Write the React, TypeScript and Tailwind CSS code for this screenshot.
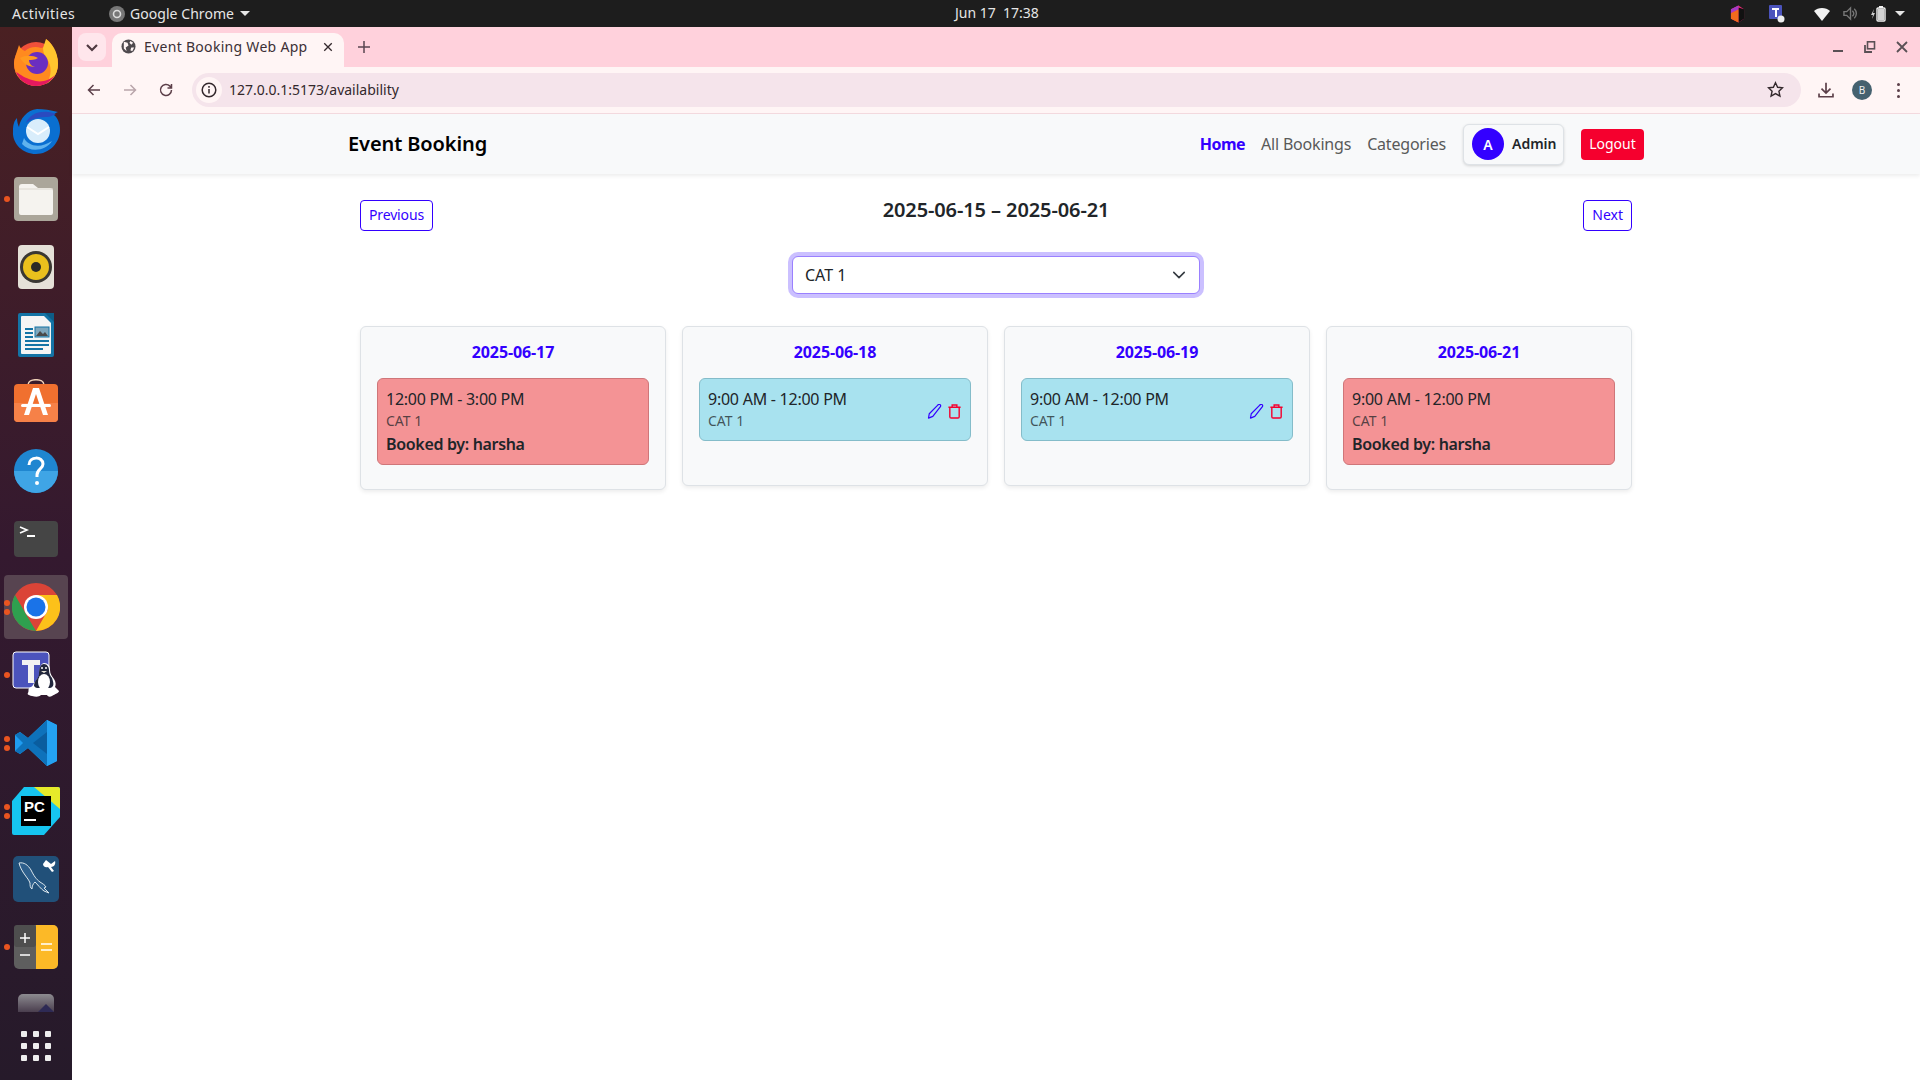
import React from 'react';

const PRIMARY = 'text-[#3300ff]';

const DockDot: React.FC<{ count?: number }> = ({ count = 0 }) => (
  <div className="w-[8px] ml-[3px] flex flex-col gap-[3px] items-center shrink-0">
    {Array.from({ length: count }).map((_, i) => (
      <div key={i} className="w-[6px] h-[6px] rounded-full bg-[#e95420]"></div>
    ))}
  </div>
);

const DockItem: React.FC<{ dots?: number; active?: boolean; first?: boolean; children: React.ReactNode }> = ({ dots, active, first, children }) => (
  <div className={`${first ? 'h-[70px]' : 'h-[68px]'} w-[72px] relative flex items-center justify-center shrink-0`}>
    {active && <div className="absolute left-[4px] top-[2px] w-[64px] h-[64px] rounded-[4px] bg-[#574450]"></div>}
    <div className="absolute left-0 top-0 bottom-0 flex items-center"><DockDot count={dots} /></div>
    <svg viewBox="0 0 48 48" className="w-[48px] h-[48px] relative">{children}</svg>
  </div>
);

const Dock: React.FC = () => (
  <aside className="w-[72px] shrink-0 bg-gradient-to-b from-[#4a2022] via-[#34192f] to-[#261a2a] flex flex-col overflow-hidden">
    <DockItem first>
      <circle cx="24" cy="26" r="22" fill="#f0503a" />
      <path d="M2 26a22 22 0 0 0 44 0c0-6-2-11-4-14-1-3-3-8-8-11 1 6-2 9-5 9-5-2-12-1-16 3-3-1-5-3-6-6C5 14 2 20 2 26z" fill="#ff8a1f" />
      <path d="M34 1c5 4 12 11 12 25 0 10-6 17-12 20 6-8 6-18 1-25-2-3-4-6-4-11 1-3 2-6 3-9z" fill="#ffc52e" />
      <path d="M4 34c3 8 11 14 20 14 8 0 15-4 19-11-6 6-15 8-23 5-7-2-11-5-16-8z" fill="#e5195f" />
      <circle cx="25" cy="25" r="11" fill="#6a2ec0" />
      <path d="M8 20c5-3 13-3 18 0-3 2-7 2-9 2 0 3 2 6 6 7-7 0-12-4-15-9z" fill="#ff9a1f" />
    </DockItem>
    <DockItem>
      <path d="M1 24c0-6 1-10 4-13 0 4 1 7 2 9 1-8 8-17 18-18 7 0 13 1 21 3-3 1-4 2-4 3 4 3 6 9 6 15 0 13-11 24-24 24S0 37 1 24z" fill="#0a6fd1" />
      <path d="M14 16c3-7 10-12 22-11 3 0 5 1 8 2-3 1-6 3-9 3-6 0-15 1-21 6z" fill="#2a4bc0" />
      <circle cx="26" cy="24" r="12" fill="#d9edfb" />
      <path d="M15 20l11 7 11-7" fill="none" stroke="#fff" strokeWidth="2" />
      <path d="M12 31c4 8 16 11 28 3-6 10-22 12-30 3z" fill="#5fb2ee" />
    </DockItem>
    <DockItem dots={1}>
      <rect x="2" y="2" width="44" height="44" rx="4" fill="#aba69a" />
      <path d="M7 12a3 3 0 0 1 3-3h11l5 4h12a3 3 0 0 1 3 3v22a2 2 0 0 1-2 2H9a2 2 0 0 1-2-2z" fill="#f5f3ef" />
      <path d="M7 14h34" stroke="#dcd8cf" strokeWidth="1" />
    </DockItem>
    <DockItem>
      <rect x="6" y="2" width="36" height="44" rx="4" fill="#e5e1d8" />
      <circle cx="24" cy="24" r="16" fill="#3a3833" />
      <circle cx="24" cy="24" r="13" fill="#eac01d" />
      <circle cx="24" cy="24" r="5" fill="#2b2a26" />
    </DockItem>
    <DockItem>
      <path d="M6 4a2 2 0 0 1 2-2h26l8 8v34a2 2 0 0 1-2 2H8a2 2 0 0 1-2-2z" fill="#1474a6" />
      <path d="M9 6a1 1 0 0 1 1-1h22l7 7v30a1 1 0 0 1-1 1H10a1 1 0 0 1-1-1z" fill="#f5f5f5" />
      <path d="M33 2h9v9z" fill="#0d5d87" />
      <rect x="13" y="17" width="8" height="2" fill="#1474a6" />
      <rect x="13" y="21" width="8" height="2" fill="#1474a6" />
      <rect x="13" y="25" width="8" height="2" fill="#1474a6" />
      <rect x="13" y="29" width="24" height="2" fill="#1474a6" />
      <rect x="13" y="33" width="24" height="2" fill="#1474a6" />
      <rect x="13" y="37" width="18" height="2" fill="#1474a6" />
      <rect x="23" y="16" width="14" height="10" fill="#7fa7bd" stroke="#1474a6" />
      <path d="M24 25l4-5 3 3 2-2 3 4z" fill="#4a4a4a" />
    </DockItem>
    <DockItem>
      <path d="M16 6c0-7 16-7 16 0" fill="none" stroke="#f0d2b8" strokeWidth="1.6" />
      <rect x="2" y="5" width="44" height="38" rx="4" fill="#f0702f" />
      <path d="M2 24h44v15a4 4 0 0 1-4 4H6a4 4 0 0 1-4-4z" fill="#f68148" />
      <path d="M21 9h6l9 27h-5l-7-21-7 21h-5z" fill="#fff" />
      <rect x="9" y="25" width="30" height="3" rx="1.5" fill="#fff" />
    </DockItem>
    <DockItem>
      <circle cx="24" cy="24" r="22" fill="#1f86d0" />
      <path d="M2 24a22 22 0 0 0 44 0z" fill="#3fa5e6" />
      <path d="M17 18c0-9 14-9 14-1 0 5-6 5-6 11v2" fill="none" stroke="#fff" strokeWidth="3" />
      <circle cx="25" cy="36" r="2" fill="#fff" />
    </DockItem>
    <DockItem>
      <rect x="2" y="6" width="44" height="36" rx="4" fill="#454545" />
      <path d="M8 12l7 3-7 3" fill="none" stroke="#fff" strokeWidth="1.6" />
      <rect x="15" y="20" width="8" height="2" fill="#fff" />
    </DockItem>
    <DockItem dots={2} active>
      <circle cx="24" cy="24" r="24" fill="#db4437" />
      <path d="M24 48A24 24 0 0 1 3 12l12 21 9 15z" fill="#2fa04f" />
      <path d="M24 48l12-21-12-15h21a24 24 0 0 1-21 36z" fill="#fcc11a" />
      <circle cx="24" cy="24" r="12" fill="#fff" />
      <circle cx="24" cy="24" r="9.5" fill="#1a73e8" />
    </DockItem>
    <DockItem dots={1}>
      <rect x="1" y="1" width="36" height="36" rx="3" fill="#4b53bc" stroke="#fff" />
      <path d="M10 9h18v5h-6v18h-6V14h-6z" fill="#f2f2f2" />
      <path d="M32 12c4 0 6 3 6 7 0 4 2 6 4 9 2 3 2 6 1 8l4 4c0 2-4 3-7 5-2 1-4 1-5-1h-6c-2 2-5 2-9 1-4-1-5-2-4-3 1-2 0-4 1-5 1-1 3-1 4-3 1-3 5-6 6-9 0-4 1-13 5-13z" fill="#fff" />
      <path d="M32 13c3 0 5 3 5 6 0 3 1 6 3 8 1 3 2 6 1 8-1 1-2 2-3 2H25c-1 0-2-1-3-2 0-3 1-5 3-7 1-2 2-3 2-5 0-4 1-10 5-10z" fill="#22273d" />
      <ellipse cx="32" cy="31" rx="6" ry="8" fill="#fff" />
      <circle cx="30" cy="17" r="1" fill="#fff" />
      <circle cx="34" cy="17" r="1" fill="#fff" />
      <path d="M29 20h6l-3 2z" fill="#e8e4d8" />
    </DockItem>
    <DockItem dots={2}>
      <path d="M35 1l10 5v36l-10 5-19-18-8 6-5-3V16l5-3 8 6z" fill="#1f9cf0" />
      <path d="M35 1L16 19 8 13l-5 3 8 8-8 8 5 3 8-6 19 18z" fill="#0e72bb" />
      <path d="M35 13v22L21 24z" fill="#0a5d9f" />
      <path d="M35 1l10 5v36l-10 5z" fill="#24a2f2" />
    </DockItem>
    <DockItem dots={2}>
      <path d="M12 0h34a2 2 0 0 1 2 2v28L32 48H2a2 2 0 0 1-2-2V14z" fill="#16c5f0" />
      <path d="M22 0h24a2 2 0 0 1 2 2v20z" fill="#e6ea2a" />
      <rect x="9" y="9" width="30" height="30" fill="#000" />
      <rect x="12" y="32" width="12" height="2" fill="#fff" />
      <text x="12" y="25" fill="#fff" fontFamily="Liberation Sans" fontSize="15" fontWeight="700">PC</text>
    </DockItem>
    <DockItem>
      <rect x="1" y="1" width="46" height="46" rx="5" fill="#215079" />
      <path d="M7 8c5-1 9 2 12 7 3 6 5 9 9 12 3 2 5 3 6 5l-2 1 5 5-5-2c-3-2-7-7-9-9-2 2-3 4-3 7-2-1-2-4-2-6-1-3-3-5-5-8-3-4-5-8-6-12z" fill="#2d5f8c" stroke="#dbe6ec" strokeWidth="1" />
      <path d="M34 5l5 4 4-3c1 3-1 6-4 6l3 4-2 1-4-5c-3 1-5-1-5-3z" fill="#fff" />
    </DockItem>
    <DockItem dots={1}>
      <rect x="2" y="2" width="44" height="44" rx="5" fill="#5e5e5e" />
      <path d="M24 2h17a5 5 0 0 1 5 5v34a5 5 0 0 1-5 5H24z" fill="#fcb927" />
      <rect x="2" y="2" width="22" height="22" fill="#4e4e4e" rx="3" />
      <path d="M8 15h10M13 10v10M8 32h10M29 21h11M29 27h11" stroke="#fff" strokeWidth="1.5" />
    </DockItem>
    <div className="h-[31px] w-[72px] shrink-0 flex justify-center items-end overflow-hidden">
      <svg viewBox="0 0 36 18" className="w-[36px] h-[18px]">
        <defs>
          <linearGradient id="trayFade" x1="0" y1="0" x2="0" y2="1">
            <stop offset="0" stopColor="#8d8b90" />
            <stop offset="1" stopColor="#4a3e4e" />
          </linearGradient>
        </defs>
        <path d="M0 5a5 5 0 0 1 5-5h26a5 5 0 0 1 5 5v13H0z" fill="url(#trayFade)" />
        <path d="M20 18l8-8 8 8z" fill="#2e2a55" />
      </svg>
    </div>
    <div className="flex-1 flex items-center justify-center pb-[1px]">
      <div className="grid grid-cols-3 gap-[6px]">
        {Array.from({ length: 9 }).map((_, i) => (
          <div key={i} className="w-[6px] h-[6px] rounded-[1px] bg-[#eeeeee]"></div>
        ))}
      </div>
    </div>
  </aside>
);

const TopBar: React.FC = () => (
  <header className="h-[27px] shrink-0 bg-[#1d1d1d] text-[#e6e6e6] text-[14px] flex items-center relative">
    <span className="ml-[12px] w-[97px] tracking-[0.5px]">Activities</span>
    <svg viewBox="0 0 16 16" className="w-[16px] h-[16px] mr-[5px]">
      <circle cx="8" cy="8" r="8" fill="#777" />
      <circle cx="8" cy="8" r="3.5" fill="none" stroke="#ddd" strokeWidth="1.6" />
    </svg>
    <span className="tracking-[0.05px]">Google Chrome</span>
    <span className="ml-[6px] w-0 h-0 border-x-[5px] border-x-transparent border-t-[5px] border-t-[#e6e6e6]"></span>
    <span className="absolute left-[955px] top-[2px] text-[14px] whitespace-pre">Jun 17  17:38</span>
    <div className="ml-auto mr-[15px] flex items-center">
      <svg viewBox="0 0 16 18" className="w-[15px] h-[18px] mr-[24px]">
        <path d="M1 4l8-4 6 4v10l-6 4-8-4z" fill="#ec2a73" />
        <path d="M9 2l6 2v10l-6 4z" fill="#111" />
        <path d="M1 8l8-4v14l-8-4z" fill="#f26a1d" />
        <path d="M1 4l8-4v4L1 8z" fill="#a43ac8" />
      </svg>
      <svg viewBox="0 0 16 18" className="w-[16px] h-[18px] mr-[29px]">
        <rect x="0" y="0" width="13" height="14" rx="1" fill="#4b53bc" />
        <path d="M3 3h7v2H8v7H6V5H3z" fill="#fff" />
        <circle cx="12" cy="14" r="3.5" fill="#eee" />
      </svg>
      <svg viewBox="0 0 16 16" className="w-[16px] h-[16px] mr-[13px]">
        <path d="M0 5c4-4 12-4 16 0l-8 10z" fill="#f2f2f2" />
      </svg>
      <svg viewBox="0 0 16 16" className="w-[15px] h-[15px] mr-[13px]">
        <path d="M1 6h3l4-4v12l-4-4H1zM10 5c2 2 2 4 0 6M12 3c3 3 3 7 0 10" fill="none" stroke="#777" strokeWidth="1.5" />
      </svg>
      <svg viewBox="0 0 16 16" className="w-[16px] h-[16px] mr-[8px]">
        <path d="M3 3L0 9h2l-1 4 3-6H2z" fill="#ccc" />
        <rect x="6" y="2" width="8" height="13" rx="1" fill="none" stroke="#f2f2f2" strokeWidth="1.4" />
        <rect x="8" y="0" width="4" height="2" fill="#f2f2f2" />
        <rect x="7" y="3" width="6" height="11" fill="#f2f2f2" opacity="0.85" />
      </svg>
      <span className="w-0 h-0 border-x-[5px] border-x-transparent border-t-[5px] border-t-[#e6e6e6]"></span>
    </div>
  </header>
);

const ToolIcon: React.FC<{ className?: string; children: React.ReactNode }> = ({ className = '', children }) => (
  <svg viewBox="0 0 16 16" fill="none" stroke="currentColor" strokeWidth="1.5" className={`w-[16px] h-[16px] shrink-0 ${className}`}>
    {children}
  </svg>
);

const BrowserChrome: React.FC = () => (
  <div className="shrink-0">
    <div className="h-[40px] bg-[#ffd1dc] flex items-end relative text-[#4f3a41]">
      <div className="ml-[6px] mb-[6px] w-[28px] h-[28px] rounded-[8px] bg-[#ffe6ec] flex items-center justify-center">
        <ToolIcon className="w-[12px] h-[12px]"><path d="M3 6l5 5 5-5" strokeWidth="2.2" /></ToolIcon>
      </div>
      <div className="ml-[6px] w-[232px] h-[34px] rounded-t-[10px] bg-[#fff5f5] flex items-center pl-[9px] pb-[7px] text-[14px] text-[#3c3035]">
        <svg viewBox="0 0 16 16" className="w-[15px] h-[15px] mr-[8px] shrink-0">
          <circle cx="8" cy="8" r="7.5" fill="#4f4a4e" />
          <path d="M3 3l4 1 1 3-3 2 1 4-3-3zM10 2l3 2-2 2-2-2zM11 9l3 0-2 4-2-1z" fill="#fff5f5" />
        </svg>
        <span className="tracking-[0.3px]">Event Booking Web App</span>
        <svg viewBox="0 0 12 12" className="w-[10px] h-[10px] ml-auto mr-[11px]" stroke="#33282c" strokeWidth="1.6"><path d="M1.5 1.5l9 9M10.5 1.5l-9 9" /></svg>
      </div>
      <svg viewBox="0 0 12 12" className="w-[12px] h-[12px] ml-[14px] mb-[14px]" stroke="#5a4550" strokeWidth="1.5"><path d="M6 0v12M0 6h12" /></svg>
      <div className="ml-auto mb-[14px] mr-[12px] flex items-center gap-[20px] text-[#5a5055]">
        <svg viewBox="0 0 12 12" className="w-[12px] h-[12px]" stroke="currentColor" strokeWidth="2"><path d="M1 10h10" /></svg>
        <svg viewBox="0 0 12 12" className="w-[12px] h-[12px]" fill="none" stroke="currentColor" strokeWidth="1.6"><rect x="3.5" y="0.8" width="7" height="7" /><path d="M1 4v7h7" strokeWidth="1.8" /></svg>
        <svg viewBox="0 0 12 12" className="w-[12px] h-[12px]" stroke="currentColor" strokeWidth="1.8"><path d="M1 1l10 10M11 1L1 11" /></svg>
      </div>
    </div>
    <div className="h-[47px] bg-[#fff5f5] border-b border-[#f5dbe0] flex items-center text-[#5c3f49]">
      <ToolIcon className="ml-[14px]"><path d="M14 8H2.5M7.5 3L2.5 8l5 5" /></ToolIcon>
      <ToolIcon className="ml-[20px] text-[#b9a5ab]"><path d="M2 8h11.5M8.5 3l5 5-5 5" /></ToolIcon>
      <ToolIcon className="ml-[20px]"><path d="M13.5 8a5.5 5.5 0 1 1-1.6-3.9L13.5 6M13.5 2v4h-4" /></ToolIcon>
      <div className="ml-[18px] mb-[1px] w-[1609px] h-[34px] rounded-full bg-[#f5e4eb] flex items-center pl-[4px]">
        <div className="w-[26px] h-[26px] rounded-full bg-[#fff5f5] flex items-center justify-center text-[#33282c]">
          <ToolIcon className="w-[14px] h-[14px]"><circle cx="8" cy="8" r="6.8" /><path d="M8 7v4.5M8 4v1.8" /></ToolIcon>
        </div>
        <span className="ml-[7px] text-[14px] text-[#33282c]">127.0.0.1:5173/availability</span>
        <ToolIcon className="ml-auto mr-[17px] w-[17px] h-[17px] text-[#33282c]"><path d="M8 1.6l2 4.3 4.6.5-3.4 3.2 1 4.6L8 11.9l-4.2 2.3 1-4.6-3.4-3.2L6 5.9z" strokeWidth="1.3" /></ToolIcon>
      </div>
      <ToolIcon className="ml-[16px] w-[18px] h-[18px]"><path d="M8 1.5v9M4 6.8l4 4 4-4M1.8 11v3h12.4v-3" /></ToolIcon>
      <div className="ml-[17px] w-[20px] h-[20px] rounded-full bg-[#45616f] text-[#f0f0f0] text-[10px] flex items-center justify-center">B</div>
      <div className="ml-[25px] flex flex-col gap-[3px]">
        <span className="w-[3px] h-[3px] rounded-full bg-[#5c3f49]"></span>
        <span className="w-[3px] h-[3px] rounded-full bg-[#5c3f49]"></span>
        <span className="w-[3px] h-[3px] rounded-full bg-[#5c3f49]"></span>
      </div>
    </div>
  </div>
);

const Navbar: React.FC = () => (
  <nav className="h-[60px] shrink-0 bg-[#f8f9fa] shadow-[0_2px_4px_rgba(0,0,0,0.075)] relative">
    <div className="w-[1320px] h-full mx-auto px-[12px] flex items-center">
      <span className="text-[20px] font-semibold text-black tracking-[-0.1px]">Event Booking</span>
      <div className="ml-auto flex items-center text-[16px]">
        <a className={`font-bold tracking-[-0.5px] ${PRIMARY}`}>Home</a>
        <a className="ml-[16px] text-[#595959] tracking-[-0.2px]">All Bookings</a>
        <a className="ml-[16px] text-[#595959] tracking-[-0.2px]">Categories</a>
        <div className="ml-[17px] h-[41px] w-[101px] rounded-[6px] border border-[#dee2e6] bg-[#f8f9fa] shadow-[0_1px_3px_rgba(0,0,0,0.15)] flex items-center pl-[8px]">
          <div className="w-[32px] h-[32px] rounded-full bg-[#3300ff] text-white text-[14px] font-semibold flex items-center justify-center">A</div>
          <span className="ml-[8px] mb-[2px] text-[14px] font-semibold text-[#212529]">Admin</span>
        </div>
        <button className="ml-[17px] h-[31px] w-[63px] rounded-[4px] bg-[#f5002e] text-white text-[14px] pb-[1px]">Logout</button>
      </div>
    </div>
  </nav>
);

const PencilIcon: React.FC = () => (
  <svg viewBox="0 0 16 16" fill="none" stroke="#3300ff" strokeWidth="1.3" className="w-[15px] h-[15px]">
    <path d="M11.5 1.2a1.6 1.6 0 0 1 2.8 1.6L6.2 13.2 1.6 15l.8-4.6z" strokeLinejoin="round" />
  </svg>
);

const TrashIcon: React.FC = () => (
  <svg viewBox="0 0 16 16" fill="none" stroke="#f5002e" strokeWidth="1.5" className="w-[15px] h-[15px]">
    <path d="M1.5 3.5h13M5.5 3.5V1h5v2.5M3 3.5v10.2c0 .8.6 1.3 1.3 1.3h7.4c.7 0 1.3-.5 1.3-1.3V3.5" />
  </svg>
);

interface Slot {
  time: string;
  bookedBy?: string;
}

const SlotCard: React.FC<{ slot: Slot }> = ({ slot }) => {
  const booked = Boolean(slot.bookedBy);
  return (
    <div
      className={`rounded-[6px] border px-[8px] pt-[8px] flex items-center justify-between ${
        booked ? 'bg-[#f49395] border-[#cf7679] mb-[8px] pb-[8px]' : 'bg-[#a8e2ef] border-[#84bcc9] mb-[28px] pb-[9px]'
      }`}
    >
      <div className="text-[16px] leading-[24px] text-[#212529]">
        <div className="tracking-[-0.25px]">{slot.time}</div>
        <div className="text-[14px] leading-[20px] text-[#212529bf]">CAT 1</div>
        {booked && <div className="mt-[1px] font-semibold tracking-[-0.33px]">Booked by: {slot.bookedBy}</div>}
      </div>
      {!booked && (
        <div className="flex items-center gap-[5px] mt-[5px]">
          <PencilIcon />
          <TrashIcon />
        </div>
      )}
    </div>
  );
};

const days: { date: string; slot: Slot }[] = [
  { date: '2025-06-17', slot: { time: '12:00 PM - 3:00 PM', bookedBy: 'harsha' } },
  { date: '2025-06-18', slot: { time: '9:00 AM - 12:00 PM' } },
  { date: '2025-06-19', slot: { time: '9:00 AM - 12:00 PM' } },
  { date: '2025-06-21', slot: { time: '9:00 AM - 12:00 PM', bookedBy: 'harsha' } },
];

const Availability: React.FC = () => (
  <main className="w-[1320px] mx-auto px-[24px] pt-[24px]">
    <div className="grid grid-cols-[1fr_auto_1fr] items-start">
      <button className={`justify-self-start mt-[2px] h-[31px] pb-[2px] px-[8px] rounded-[4px] border border-[#3300ff] bg-white text-[14px] tracking-[-0.15px] ${PRIMARY}`}>Previous</button>
      <h2 className="text-[20px] leading-[24px] font-semibold text-[#212529] tracking-[-0.1px]">2025-06-15 – 2025-06-21</h2>
      <button className={`justify-self-end mt-[2px] h-[31px] pb-[2px] px-[8px] rounded-[4px] border border-[#3300ff] bg-white text-[14px] ${PRIMARY}`}>Next</button>
    </div>
    <div className="mt-[25px] mx-auto w-[408px] h-[38px] rounded-[6px] border border-[#9a80ff] bg-white shadow-[0_0_0_4px_#cbc0ff] pl-[12px] pr-[13px] flex items-center justify-between text-[16px] text-[#212529]">
      <span>CAT 1</span>
      <svg viewBox="0 0 16 16" fill="none" stroke="#343a40" strokeWidth="1.8" strokeLinecap="round" strokeLinejoin="round" className="w-[14px] h-[14px]">
        <path d="M2 5l6 6 6-6" />
      </svg>
    </div>
    <div className="mt-[32px] grid grid-cols-4 gap-[16px] items-start">
      {days.map((day) => (
        <section key={day.date} className="rounded-[6px] border border-[#dee2e6] bg-[#f8f9fa] shadow-[0_2px_4px_rgba(0,0,0,0.075)] px-[16px] pt-[13px] pb-[16px]">
          <h3 className={`text-center text-[16px] leading-[24px] font-bold tracking-[-0.1px] mb-[14px] ${PRIMARY}`}>{day.date}</h3>
          <SlotCard slot={day.slot} />
        </section>
      ))}
    </div>
  </main>
);

const App: React.FC = () => (
  <div className="w-[1920px] h-[1080px] overflow-hidden flex flex-col bg-white font-['Noto_Sans',sans-serif]">
    <TopBar />
    <div className="flex flex-1 min-h-0">
      <Dock />
      <div className="flex-1 min-w-0 flex flex-col">
        <BrowserChrome />
        <Navbar />
        <Availability />
      </div>
    </div>
  </div>
);

export default App;
